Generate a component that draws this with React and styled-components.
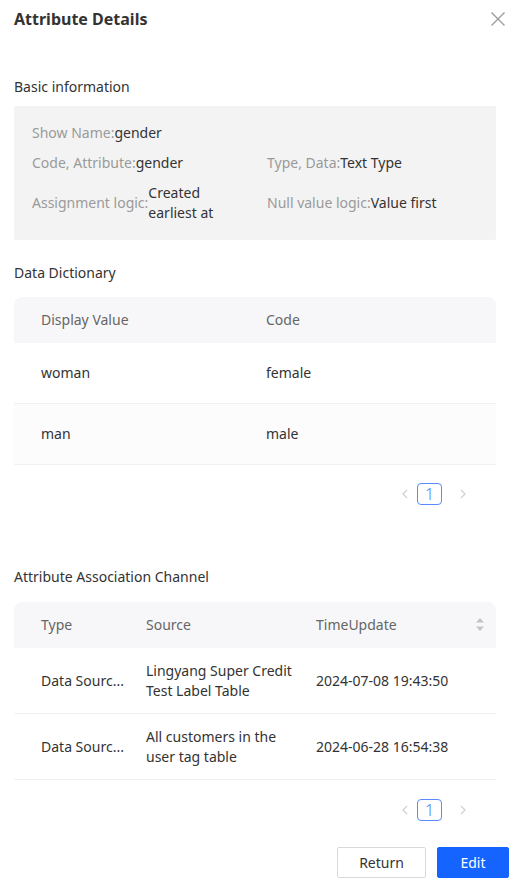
import React from "react";
import styled, { createGlobalStyle } from "styled-components";

const Global = createGlobalStyle`
  html, body { margin: 0; padding: 0; background: #fff; }
  body { font-family: "Noto Sans", "Liberation Sans", Arial, sans-serif; color: #333; }
  * { box-sizing: border-box; }
`;

const Drawer = styled.div`
  width: 520px;
  height: 886px;
  background: #fff;
  display: flex;
  flex-direction: column;
  overflow: hidden;
`;

const Header = styled.div`
  height: 38px;
  display: flex;
  align-items: center;
  justify-content: space-between;
  padding: 0 15px 0 14px;
`;

const Title = styled.h1`
  margin: 0;
  font-size: 16px;
  line-height: 22px;
  font-weight: 700;
  color: #333;
`;

const CloseButton = styled.button`
  border: 0;
  background: none;
  padding: 0;
  width: 14px;
  height: 14px;
  display: flex;
  cursor: pointer;
`;

const Body = styled.div`
  padding: 0 24px 0 14px;
  display: flex;
  flex-direction: column;
`;

const SectionTitle = styled.div`
  margin-top: ${(p) => p.$top}px;
  margin-bottom: ${(p) => p.$bottom}px;
  font-size: 14px;
  line-height: 20px;
  color: #333;
`;

const InfoBox = styled.div`
  background: #f3f3f3;
  border-radius: 2px;
  padding: 17px 18px;
  display: grid;
  grid-template-columns: 200px 200px;
  column-gap: 35px;
  row-gap: 10px;
`;

const InfoItem = styled.div`
  display: flex;
  align-items: center;
  grid-column: ${(p) => (p.$full ? "1 / -1" : "auto")};
  font-size: 14px;
  line-height: 20px;
`;

const InfoLabel = styled.span`
  color: #9a9a9a;
  white-space: nowrap;
`;

const InfoValue = styled.span`
  color: #333;
`;

const Table = styled.div`
  display: flex;
  flex-direction: column;
`;

const HeadRow = styled.div`
  display: grid;
  grid-template-columns: ${(p) => p.$cols};
  column-gap: ${(p) => p.$gap}px;
  align-items: center;
  height: 46px;
  padding: 0 12px 0 27px;
  background: #f7f7f9;
  border-radius: 8px 8px 0 0;
  font-size: 14px;
  line-height: 20px;
  color: #666;
`;

const Row = styled.div`
  display: grid;
  grid-template-columns: ${(p) => p.$cols};
  column-gap: ${(p) => p.$gap}px;
  align-items: center;
  height: ${(p) => p.$h}px;
  padding: 0 12px 0 27px;
  background: ${(p) => (p.$shade ? "#fcfcfc" : "#fff")};
  border-bottom: 1px solid #f0f0f0;
  font-size: 14px;
  line-height: 20px;
  color: #333;
`;

const Cell = styled.div`
  min-width: 0;
  white-space: ${(p) => (p.$nowrap ? "nowrap" : "normal")};
`;

const SortHead = styled.div`
  display: flex;
  align-items: center;
  justify-content: space-between;
`;

const Pager = styled.div`
  margin-top: ${(p) => p.$top}px;
  display: flex;
  justify-content: flex-end;
  align-items: center;
  padding-right: 21px;
`;

const PagerArrow = styled.button`
  width: 24px;
  height: 22px;
  border: 0;
  background: none;
  padding: 0;
  display: flex;
  align-items: center;
  justify-content: center;
  margin-left: ${(p) => (p.$next ? 9 : 0)}px;
`;

const PageItem = styled.div`
  width: 25px;
  height: 22px;
  border: 1px solid #5b8cff;
  border-radius: 4px;
  color: #4f7fff;
  font-size: 16px;
  font-weight: 300;
  line-height: 20px;
  text-align: center;
`;

const Footer = styled.div`
  margin-top: 26px;
  display: flex;
  justify-content: flex-end;
  gap: 11px;
  padding-right: 11px;
`;

const Button = styled.button`
  height: 31px;
  width: ${(p) => p.$w}px;
  border-radius: 2px;
  font-family: inherit;
  font-size: 14px;
  border: 1px solid ${(p) => (p.$primary ? "#1664ff" : "#d9d9d9")};
  background: ${(p) => (p.$primary ? "#1664ff" : "#fff")};
  color: ${(p) => (p.$primary ? "#fff" : "#333")};
  cursor: pointer;
`;

const CloseIcon = () => (
  <svg width="14" height="14" viewBox="0 0 14 14">
    <path d="M0.5 0.5 L13.5 13.5 M13.5 0.5 L0.5 13.5" stroke="#9c9c9c" strokeWidth="1.4" fill="none" />
  </svg>
);

const SortIcon = () => (
  <svg width="8" height="14" viewBox="0 0 8 14">
    <path d="M4 0 L8 4.5 L0 4.5 Z" fill="#c4c4c4" />
    <path d="M0 8.5 L8 8.5 L4 13 Z" fill="#c4c4c4" />
  </svg>
);

const Chevron = ({ right }) => (
  <svg width="6" height="10" viewBox="0 0 6 10">
    <path
      d={right ? "M1 1 L5 5 L1 9" : "M5 1 L1 5 L5 9"}
      stroke="#cfcfcf"
      strokeWidth="1.2"
      fill="none"
    />
  </svg>
);

const Pagination = ({ top }) => (
  <Pager $top={top}>
    <PagerArrow aria-label="prev">
      <Chevron />
    </PagerArrow>
    <PageItem>1</PageItem>
    <PagerArrow $next aria-label="next">
      <Chevron right />
    </PagerArrow>
  </Pager>
);

const dictCols = "198px 1fr";
const chanCols = "84px 149px 1fr";

const dict = [
  { d: "woman", c: "female" },
  { d: "man", c: "male" },
];

const channels = [
  { t: "Data Sourc...", s: "Lingyang Super Credit Test Label Table", u: "2024-07-08 19:43:50" },
  { t: "Data Sourc...", s: "All customers in the user tag table", u: "2024-06-28 16:54:38" },
];

export default function App() {
  return (
    <>
      <Global />
      <Drawer>
        <Header>
          <Title>Attribute Details</Title>
          <CloseButton aria-label="close">
            <CloseIcon />
          </CloseButton>
        </Header>
        <Body>
          <SectionTitle $top={39} $bottom={9}>Basic information</SectionTitle>
          <InfoBox>
            <InfoItem $full>
              <InfoLabel>Show Name:</InfoLabel>
              <InfoValue>gender</InfoValue>
            </InfoItem>
            <InfoItem>
              <InfoLabel>Code, Attribute:</InfoLabel>
              <InfoValue>gender</InfoValue>
            </InfoItem>
            <InfoItem>
              <InfoLabel>Type, Data:</InfoLabel>
              <InfoValue>Text Type</InfoValue>
            </InfoItem>
            <InfoItem>
              <InfoLabel>Assignment logic:</InfoLabel>
              <InfoValue>Created earliest at</InfoValue>
            </InfoItem>
            <InfoItem>
              <InfoLabel>Null value logic:</InfoLabel>
              <InfoValue>Value first</InfoValue>
            </InfoItem>
          </InfoBox>

          <SectionTitle $top={23} $bottom={14}>Data Dictionary</SectionTitle>
          <Table>
            <HeadRow $cols={dictCols} $gap={27}>
              <Cell>Display Value</Cell>
              <Cell>Code</Cell>
            </HeadRow>
            {dict.map((r, i) => (
              <Row key={r.c} $cols={dictCols} $gap={27} $h={61} $shade={i === 1}>
                <Cell>{r.d}</Cell>
                <Cell>{r.c}</Cell>
              </Row>
            ))}
          </Table>
          <Pagination top={18} />

          <SectionTitle $top={62} $bottom={15}>Attribute Association Channel</SectionTitle>
          <Table>
            <HeadRow $cols={chanCols} $gap={21}>
              <Cell>Type</Cell>
              <Cell>Source</Cell>
              <SortHead>
                <span>TimeUpdate</span>
                <SortIcon />
              </SortHead>
            </HeadRow>
            {channels.map((r) => (
              <Row key={r.u} $cols={chanCols} $gap={21} $h={66}>
                <Cell $nowrap>{r.t}</Cell>
                <Cell>{r.s}</Cell>
                <Cell>{r.u}</Cell>
              </Row>
            ))}
          </Table>
          <Pagination top={19} />
        </Body>
        <Footer>
          <Button $w={89}>Return</Button>
          <Button $w={72} $primary>Edit</Button>
        </Footer>
      </Drawer>
    </>
  );
}
